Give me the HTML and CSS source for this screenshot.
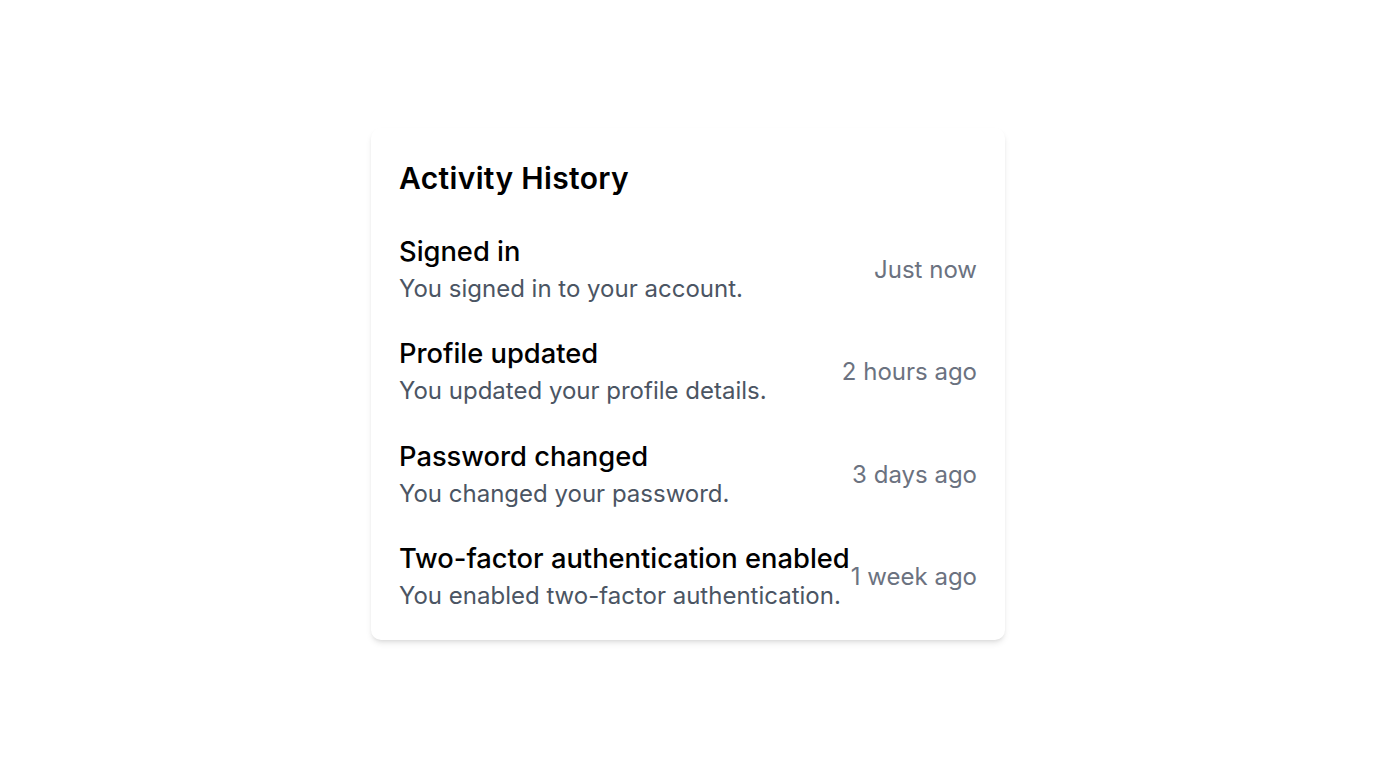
FILE: index.html
```html
<!DOCTYPE html>
<html lang="en">
<head>
<meta charset="utf-8">
<title>Activity History</title>
<link rel="stylesheet" href="styles.css">
</head>
<body>
<main class="page">
  <section class="card">
    <h2 class="card-title">Activity History</h2>
    <ul class="list">
      <li class="item">
        <div class="item-main">
          <div class="item-title">Signed in</div>
          <div class="item-desc">You signed in to your account.</div>
        </div>
        <div class="item-time">Just now</div>
      </li>
      <li class="item">
        <div class="item-main">
          <div class="item-title">Profile updated</div>
          <div class="item-desc">You updated your profile details.</div>
        </div>
        <div class="item-time">2 hours ago</div>
      </li>
      <li class="item">
        <div class="item-main">
          <div class="item-title">Password changed</div>
          <div class="item-desc">You changed your password.</div>
        </div>
        <div class="item-time">3 days ago</div>
      </li>
      <li class="item">
        <div class="item-main">
          <div class="item-title">Two-factor authentication enabled</div>
          <div class="item-desc">You enabled two-factor authentication.</div>
        </div>
        <div class="item-time">1 week ago</div>
      </li>
    </ul>
  </section>
</main>
</body>
</html>
```

FILE: styles.css
```css
* { box-sizing: border-box; }
html, body { margin: 0; padding: 0; }
body {
  font-family: Inter, "Noto Sans", sans-serif;
  background: #ffffff;
  color: #000;
}
.page {
  min-height: 768px;
  display: flex;
  align-items: center;
  justify-content: center;
}
.card {
  width: 634px;
  background: #fff;
  border-radius: 10px;
  padding: 28px 28px 26px;
  box-shadow: 0 4px 6px -1px rgba(0,0,0,0.1), 0 2px 4px -2px rgba(0,0,0,0.1);
}
.card-title {
  margin: 0 0 32px;
  font-size: 30px;
  line-height: 45px;
  font-weight: 600;
  letter-spacing: 0.35px;
}
.list {
  list-style: none;
  margin: 0;
  padding: 0;
  display: flex;
  flex-direction: column;
  gap: 28.3px;
}
.item {
  display: flex;
  align-items: center;
  justify-content: space-between;
}
.item-main {
  white-space: nowrap;
}
.item-title {
  font-size: 27.3px;
  line-height: 38px;
  font-weight: 500;
}
.item-desc {
  font-size: 24px;
  line-height: 36px;
  color: #4b5563;
}
.item-time {
  flex-shrink: 0;
  font-size: 24px;
  line-height: 36px;
  color: #6b7280;
  white-space: nowrap;
}
```
